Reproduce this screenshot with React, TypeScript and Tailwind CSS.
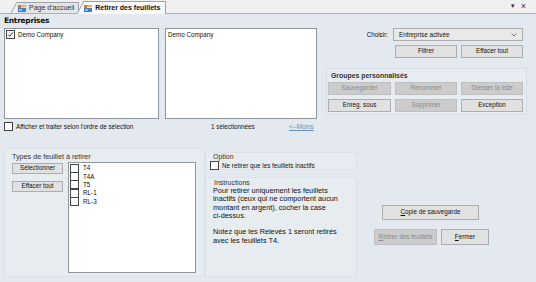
const Btn = ({
  label,
  w,
  h = 13,
  disabled = false,
  ul,
}: {
  label: string;
  w: string;
  h?: number;
  disabled?: boolean;
  ul?: boolean;
}) => {
  const first = label.charAt(0);
  const rest = label.slice(1);
  return (
    <div
      className={
        (disabled
          ? "bg-[#cccccc] border-[#bfbfbf] text-[#8a8a8a] "
          : "bg-[#e1e1e1] border-[#adadad] text-[#111] ") +
        w +
        " border flex items-center justify-center text-[6.3px] leading-none shrink-0"
      }
      style={{ height: h }}
    >
      {ul ? (
        <span>
          <span className="underline">{first}</span>
          {rest}
        </span>
      ) : (
        label
      )}
    </div>
  );
};

const Check = ({ checked = false }: { checked?: boolean }) => (
  <div className="w-[9px] h-[9px] border border-[#444] bg-white flex items-center justify-center shrink-0">
    {checked && (
      <svg width="7" height="7" viewBox="0 0 7 7">
        <path d="M1 3.5 L2.8 5.4 L6 1.3" fill="none" stroke="#222" strokeWidth="0.9" />
      </svg>
    )}
  </div>
);

const TabIcon = () => (
  <svg width="8" height="7" viewBox="0 0 8 7" className="shrink-0">
    <rect x="0" y="0" width="3" height="3" fill="#e86a2a" />
    <rect x="3" y="0" width="5" height="2" fill="#f2b441" />
    <rect x="0" y="3" width="8" height="4" fill="#3f7fd0" />
    <rect x="1" y="4" width="3" height="2" fill="#8fc0ef" />
  </svg>
);

const App = () => {
  return (
    <div className="w-[536px] h-[282px] bg-[#e3e9ee] overflow-hidden text-[#111] font-['Liberation_Sans',Arial,sans-serif] flex flex-col">
      {/* tab strip */}
      <div className="h-[14px] bg-[#f0f0f0] border-b border-[#a9b1b8] flex items-end shrink-0">
        <div className="ml-[11px] h-[11px] flex items-end">
          <svg width="6" height="11" viewBox="0 0 6 11" className="shrink-0">
            <path d="M0 11 L6 0" stroke="#9aa3ab" strokeWidth="1" />
          </svg>
          <div className="h-[11px] bg-[#e4e4e4] border-t border-r border-[#9aa3ab] flex items-center gap-[3px] pl-[1px] pr-[4px] text-[7px] text-[#333]">
            <TabIcon />
            <span>Page d'accueil</span>
          </div>
        </div>
        <div className="h-[13px] flex items-end -mb-px -ml-[2px]">
          <svg width="7" height="13" viewBox="0 0 7 13" className="shrink-0">
            <path d="M0 13 L7 0 L7 13 Z" fill="#fafafa" />
            <path d="M0 13 L7 0" stroke="#9aa3ab" strokeWidth="1" />
          </svg>
          <div className="h-[13px] bg-[#fafafa] border-t border-r border-[#9aa3ab] flex items-center gap-[3px] pl-[0px] pr-[5px] text-[7px] font-bold text-[#111]">
            <TabIcon />
            <span>Retirer des feuillets</span>
          </div>
        </div>
        <div className="flex-1" />
        <div className="h-[13px] flex items-center gap-[5px] pr-[10px] text-[#333]">
          <span className="text-[6px]">▼</span>
          <span className="text-[9px] leading-none">×</span>
        </div>
      </div>

      {/* Entreprises */}
      <div className="h-[14px] pl-[4px] flex items-center text-[7.5px] font-bold font-['DejaVu_Sans',sans-serif] tracking-[-0.3px]">
        Entreprises
      </div>

      <div className="flex h-[91px]">
        <div className="ml-[4px] w-[155px] bg-white border border-[#8f969d] p-[1px]">
          <div className="flex items-center gap-[3px] text-[6.3px]">
            <Check checked />
            <span>Demo Company</span>
          </div>
        </div>
        <div className="ml-[6px] w-[152px] bg-white border border-[#8f969d] px-[2px] py-[1px] text-[6.3px]">
          Demo Company
        </div>

        <div className="ml-[9px] w-[201px] flex flex-col">
          <div className="flex items-center h-[13px]">
            <div className="w-[62px] text-right text-[6.3px]">Choisir:</div>
            <div className="ml-[5px] w-[130px] h-[13px] bg-[#e9e9e9] border border-[#acacac] flex items-center justify-between px-[5px] text-[6.3px]">
              <span>Entreprise activée</span>
              <svg width="6" height="4" viewBox="0 0 6 4">
                <path d="M0.5 0.5 L3 3 L5.5 0.5" fill="none" stroke="#555" strokeWidth="0.8" />
              </svg>
            </div>
          </div>
          <div className="flex gap-[4px] mt-[4px] ml-[69px]">
            <Btn label="Filtrer" w="w-[62px]" />
            <Btn label="Effacer tout" w="w-[62px]" />
          </div>
          <div className="mt-[10px] h-[47px] border border-[#d6dee4] bg-[#e6ecf0] flex flex-col">
            <div className="pl-[4px] pt-[2px] h-[13px] text-[6.9px] font-bold text-[#333]">
              Groupes personnalisés
            </div>
            <div className="flex gap-[4px] pl-[1px]">
              <Btn label="Sauvegarder" w="w-[63px]" disabled />
              <Btn label="Renommer" w="w-[62px]" disabled />
              <Btn label="Dresser la liste" w="w-[62px]" disabled />
            </div>
            <div className="flex gap-[4px] pl-[1px] mt-[4px]">
              <Btn label="Enreg. sous" w="w-[63px]" />
              <Btn label="Supprimer" w="w-[62px]" disabled />
              <Btn label="Exception" w="w-[62px]" />
            </div>
          </div>
        </div>
      </div>

      <div className="flex items-center h-[9px] mt-[3px] text-[6.3px]">
        <div className="ml-[4px] flex items-center gap-[3px] w-[207px]">
          <Check />
          <span>Afficher et traiter selon l'ordre de sélection</span>
        </div>
        <div className="w-[78px]">1 sélectionnées</div>
        <div className="underline text-[#6a8db8]">&lt;--Moins</div>
      </div>

      {/* bottom */}
      <div className="flex mt-[17px] h-[129px]">
        <div className="ml-[4px] w-[201px] border border-[#dbe2e7] bg-[#e6ecf0] flex flex-col">
          <div className="pl-[7px] pt-[3px] h-[13px] text-[7.2px] text-[#333]">Types de feuillet à retirer</div>
          <div className="flex">
            <div className="ml-[7px] flex flex-col gap-[7px] pt-[1px]">
              <Btn label="Sélectionner" w="w-[51px]" h={11} />
              <Btn label="Effacer tout" w="w-[51px]" h={11} />
            </div>
            <div className="ml-[5px] w-[128px] h-[111px] bg-white border border-[#8f969d] pl-[1px] pt-[1px] flex flex-col">
              {["T4", "T4A", "T5", "RL-1", "RL-3"].map((t) => (
                <div key={t} className="flex items-center gap-[4px] h-[8.3px] text-[6.3px]">
                  <Check />
                  <span>{t}</span>
                </div>
              ))}
            </div>
          </div>
        </div>

        <div className="w-[152px] flex flex-col">
          <div className="mt-[4px] h-[18px] border border-[#dbe2e7] bg-[#e6ecf0] flex flex-col">
            <div className="pl-[7px] text-[7px] leading-[8px] text-[#333]">Option</div>
            <div className="flex items-center gap-[3px] pl-[4px] text-[6.3px]">
              <Check />
              <span>Ne retirer que les feuillets inactifs</span>
            </div>
          </div>
          <div className="mt-[7px] flex-1 border border-[#dbe2e7] bg-[#e6ecf0] flex flex-col">
            <div className="pl-[8px] text-[7px] leading-[9px] text-[#333]">Instructions</div>
            <div className="pl-[7px] text-[7.3px] leading-[8.3px] text-[#111]">
              <div>Pour retirer uniquement les feuillets</div>
              <div>inactifs (ceux qui ne comportent aucun</div>
              <div>montant en argent), cocher la case</div>
              <div>ci-dessus.</div>
              <div className="h-[8.3px]" />
              <div>Notez que les Relevés 1 seront retirés</div>
              <div>avec les feuillets T4.</div>
            </div>
          </div>
        </div>

        <div className="flex flex-col ml-[17px]">
          <div className="mt-[57px] ml-[8px]">
            <Btn label="Copie de sauvegarde" w="w-[97px]" h={15} ul />
          </div>
          <div className="flex gap-[4px] mt-[9px]">
            <Btn label="Retirer des feuillets" w="w-[63px]" h={16} disabled ul />
            <Btn label="Fermer" w="w-[48px]" h={16} ul />
          </div>
        </div>
      </div>
    </div>
  );
};

export default App;
